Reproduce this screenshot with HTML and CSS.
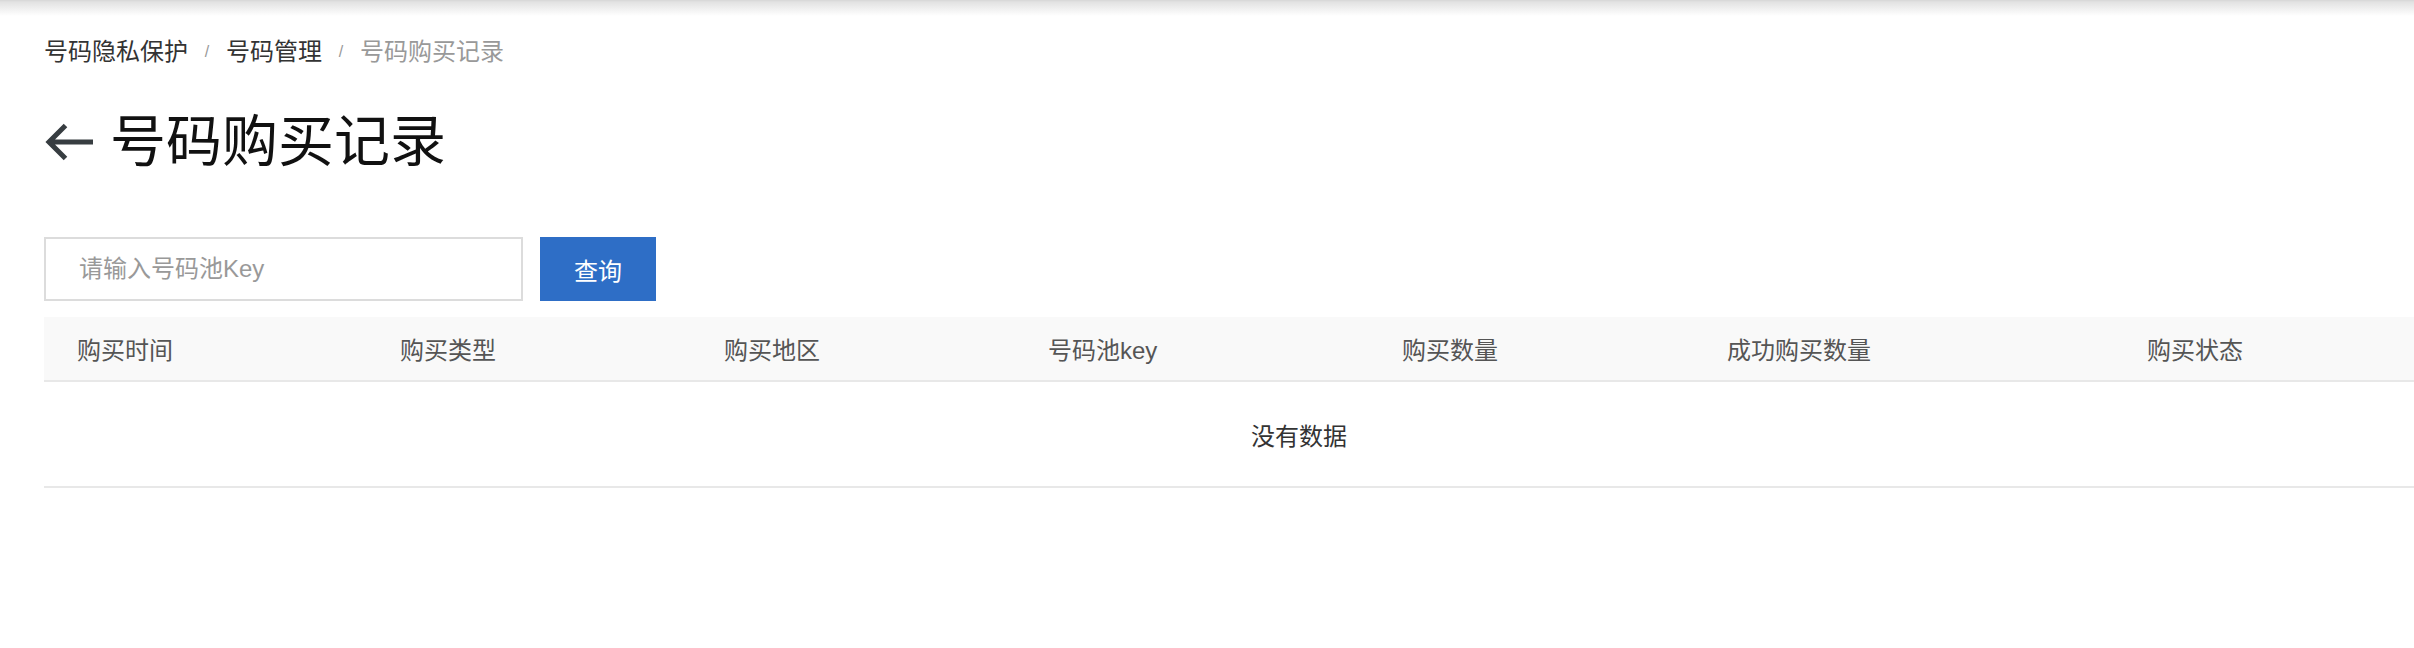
FILE: index.html
```html
<!DOCTYPE html>
<html lang="zh-CN">
<head>
    <meta charset="UTF-8">
    <meta name="viewport" content="width=device-width, initial-scale=1.0">
    <title>号码购买记录</title>
    <link rel="stylesheet" href="styles.css">
</head>
<body>
    <div class="topshade"></div>
    <div class="page">
        <div class="crumb">
            <a href="#">号码隐私保护</a>
            <span class="sep">/</span>
            <a href="#">号码管理</a>
            <span class="sep">/</span>
            <span class="current">号码购买记录</span>
        </div>
        <h1 class="title">
            <a class="back" href="#">
                <svg width="49" height="38" viewBox="0 0 49 38">
                    <path d="M5 19H49M21.5 2.5L5 19l16.5 16.5" fill="none" stroke="#373d41" stroke-width="5"/>
                </svg>
            </a>
            <span>号码购买记录</span>
        </h1>
        <div class="search">
            <input type="text" placeholder="请输入号码池Key">
            <button>查询</button>
        </div>
        <table class="list">
            <colgroup>
                <col class="c1"><col class="c2"><col class="c3"><col class="c4">
                <col class="c5"><col class="c6"><col class="c7">
            </colgroup>
            <thead>
                <tr>
                    <th>购买时间</th>
                    <th>购买类型</th>
                    <th>购买地区</th>
                    <th>号码池key</th>
                    <th>购买数量</th>
                    <th>成功购买数量</th>
                    <th>购买状态</th>
                </tr>
            </thead>
            <tbody>
                <tr>
                    <td class="empty" colspan="7">没有数据</td>
                </tr>
            </tbody>
        </table>
    </div>
</body>
</html>
```
FILE: styles.css
```css
* {
    margin: 0;
    padding: 0;
    box-sizing: border-box;
}

html, body {
    background: #fff;
    overflow: hidden;
}

body {
    font-family: "Liberation Sans", "Noto Sans CJK SC", sans-serif;
    color: #333;
}

a {
    color: inherit;
    text-decoration: none;
}

.topshade {
    height: 16px;
    background: linear-gradient(to bottom, #d6d6d6 0, #e2e2e2 2px, #fff 16px);
}

.page {
    padding-left: 44px;
    width: 2414px;
    overflow: hidden;
}

/* 面包屑 */
.crumb {
    display: flex;
    align-items: center;
    margin-top: 18px;
    height: 36px;
    font-size: 24px;
    line-height: 36px;
    color: #333;
    white-space: nowrap;
}

.crumb .sep {
    width: 38px;
    text-align: center;
    font-size: 16px;
    color: #999;
}

.crumb .current {
    color: #999;
}

/* 标题 */
.title {
    display: flex;
    align-items: center;
    margin-top: 38px;
    height: 68px;
    font-size: 56px;
    line-height: 68px;
    font-weight: normal;
    color: #111;
}

.title .back {
    display: flex;
    margin-right: 17px;
}

/* 搜索 */
.search {
    display: flex;
    margin-top: 61px;
}

.search input {
    width: 479px;
    height: 64px;
    padding-left: 33px;
    border: 2px solid #dcdcdc;
    outline: none;
    font-family: inherit;
    font-size: 24px;
    color: #333;
}

.search input::placeholder {
    color: #999;
}

.search button {
    width: 116px;
    height: 64px;
    margin-left: 17px;
    border: 0;
    background: #2e6ec6;
    color: #fff;
    font-family: inherit;
    font-size: 24px;
    cursor: pointer;
}

/* 列表 */
.list {
    margin-top: 16px;
    width: 2510px;
    table-layout: fixed;
    border-collapse: collapse;
    font-size: 24px;
}

.list .c1 { width: 323px; }
.list .c2 { width: 324px; }
.list .c3 { width: 324px; }
.list .c4 { width: 354px; }
.list .c5 { width: 325px; }
.list .c6 { width: 420px; }
.list .c7 { width: 440px; }

.list th {
    height: 64px;
    padding: 0 0 0 33px;
    background: #f9f9f9;
    border-bottom: 2px solid #e8e8e8;
    text-align: left;
    font-weight: normal;
    color: #555;
}

.list td.empty {
    height: 106px;
    border-bottom: 2px solid #e8e8e8;
    text-align: center;
    color: #333;
}
```
